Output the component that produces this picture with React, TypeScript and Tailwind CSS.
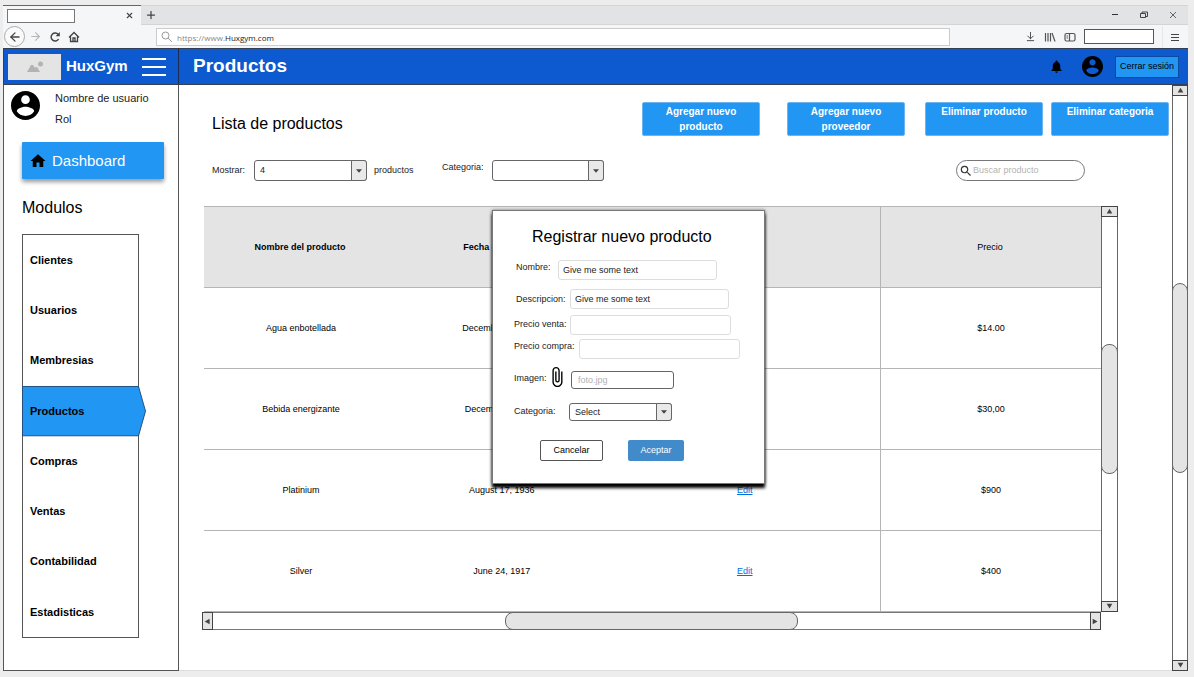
import React from "react";
import { MdNotifications, MdHome, MdSearch, MdAttachFile } from "react-icons/md";
import { ArrowLeft, ArrowRight, ArrowDownToLine, Plus, X } from "lucide-react";

const modules = ["Clientes", "Usuarios", "Membresias", "Productos", "Compras", "Ventas", "Contabilidad", "Estadisticas"];

const products = [
  { name: "Agua enbotellada", date: "December 10, 1815", price: "$14.00" },
  { name: "Bebida energizante", date: "December 9, 1906", price: "$30,00" },
  { name: "Platinium", date: "August 17, 1936", price: "$900" },
  { name: "Silver", date: "June 24, 1917", price: "$400" },
];

const arrows = {
  up: "M5 1 L9 8 H1 Z",
  down: "M5 8 L9 1 H1 Z",
  left: "M1 5 L8 1 V9 Z",
  right: "M8 5 L1 1 V9 Z",
};

function AccountIcon({ className }: { className: string }) {
  return (
    <svg viewBox="2 2 20 20" className={className} fill="currentColor">
      <path d="M12 2C6.480 2 2 6.480 2 12s4.480 10 10 10 10-4.480 10-10S17.520 2 12 2zm0 3c1.660 0 3 1.340 3 3s-1.340 3-3 3-3-1.340-3-3 1.340-3 3-3zm0 14.200c-2.500 0-4.710-1.280-6-3.220.030-1.990 4-3.080 6-3.080 1.990 0 5.970 1.090 6 3.080-1.290 1.940-3.500 3.220-6 3.220z" />
    </svg>
  );
}

function ArrowButton({ dir, className }: { dir: keyof typeof arrows; className: string }) {
  return (
    <button
      type="button"
      aria-label={`Desplazar ${dir}`}
      className={`flex shrink-0 items-center justify-center border border-[#444] bg-[#e4e4e4] ${className}`}
    >
      <svg viewBox="0 0 10 10" className="size-[7px] shrink-0" fill="#444">
        <path d={arrows[dir]} />
      </svg>
    </button>
  );
}

function VerticalScrollbar({ className }: { className: string }) {
  return (
    <div className={`flex shrink-0 flex-col ${className}`}>
      <ArrowButton dir="up" className="h-[11px] w-full" />
      <div className="flex flex-1 flex-col border-x border-[#666] bg-white">
        <div className="flex-1" />
        <div className="-mx-px flex-1 rounded-[8px] border border-[#666] bg-[#e4e4e4]" />
        <div className="flex-1" />
      </div>
      <ArrowButton dir="down" className="h-[11px] w-full" />
    </div>
  );
}

function HorizontalScrollbar() {
  return (
    <div className="mr-[17px] flex h-[18px]">
      <ArrowButton dir="left" className="h-full w-[11px]" />
      <div className="flex flex-1 border-y border-[#777] bg-white">
        <div className="flex-1" />
        <div className="-my-px flex-1 rounded-[8px] border border-[#666] bg-[#e4e4e4]" />
        <div className="flex-1" />
      </div>
      <ArrowButton dir="right" className="h-full w-[11px]" />
    </div>
  );
}

function SelectBox({ id, options, className }: { id: string; options: string[]; className: string }) {
  return (
    <div className={`relative ${className}`}>
      <select id={id} className="size-full appearance-none rounded-[3px] border border-[#666] bg-white pt-px pl-[5px] text-[9px] text-[#222]">
        {options.map((o) => (
          <option key={o}>{o}</option>
        ))}
      </select>
      <span className="pointer-events-none absolute inset-y-0 right-0 flex w-4 items-center justify-center rounded-r-[3px] border border-[#666] bg-[#e9e9e9]">
        <svg viewBox="0 0 10 6" className="h-[4px] w-[6px]" fill="#444">
          <path d="M0 0H10L5 6Z" />
        </svg>
      </span>
    </div>
  );
}

function Browser() {
  return (
    <div className="text-[#444]">
      <div className="flex h-5 bg-[#e2e3e5]">
        <div className="flex w-[138px] items-center justify-between border-t border-[#0a7ae6] bg-[#f5f6f8] pr-[7px] pl-1">
          <div className="h-[14px] w-[68px] border border-[#777] bg-white" />
          <button type="button" aria-label="Cerrar pestaña"><X size={9} strokeWidth={3} /></button>
        </div>
        <div className="flex flex-1 items-center border-t border-b border-[#d3d4d6] pr-[11px] pl-1">
          <button type="button" aria-label="Nueva pestaña"><Plus size={12} strokeWidth={2.5} /></button>
          <div className="ml-auto flex items-center gap-[21px]">
            <button type="button" aria-label="Minimizar">
              <svg viewBox="0 0 8 8" className="size-2" stroke="#333" fill="none"><path d="M1 3.500H7" /></svg>
            </button>
            <button type="button" aria-label="Restaurar">
              <svg viewBox="0 0 8 8" className="size-2" stroke="#333" fill="none"><path d="M.5 2.500H5.500V6.500H.5Z M2 2.500V1H7.500V5.500H5.500" strokeWidth=".9" /></svg>
            </button>
            <button type="button" aria-label="Cerrar">
              <svg viewBox="0 0 8 8" className="size-2" stroke="#444" fill="none"><path d="M1 1L7 7M7 1L1 7" strokeWidth=".8" /></svg>
            </button>
          </div>
        </div>
      </div>
      <div className="flex h-[23px] items-center bg-[#f5f6f8] pr-[9px]">
        <div className="flex w-[153px] shrink-0 items-center pl-px">
          <button type="button" aria-label="Atrás" className="flex size-[21px] items-center justify-center rounded-full border border-[#aaa] bg-[#fafafa]">
            <ArrowLeft size={14} strokeWidth={2.2} />
          </button>
          <button type="button" aria-label="Adelante" className="ml-1 text-[#b5b5b5]"><ArrowRight size={13} /></button>
          <button type="button" aria-label="Recargar" className="ml-[7px]">
            <svg viewBox="0 0 12 12" className="size-3" fill="none" stroke="#444" strokeWidth="1.500"><path d="M9.600 8A4 4 0 1 1 9.300 3.600" /><path d="M10.800 1V5.200H6.600Z" fill="#444" stroke="none" /></svg>
          </button>
          <button type="button" aria-label="Inicio" className="ml-[7px]">
            <svg viewBox="0 0 12 12" className="size-3" fill="none" stroke="#444" strokeWidth="1.300"><path d="M1 6.500L6 1.500L11 6.500M2.500 5.500V10.500H9.500V5.500" /><path d="M5 10V7H7V10" /></svg>
          </button>
        </div>
        <label className="flex h-[18px] w-[67.5%] items-center gap-1 border border-[#ccc] bg-white pl-1">
          <svg viewBox="0 0 12 12" className="size-3" fill="none" stroke="#999"><circle cx="4.500" cy="4.500" r="3.500" /><path d="M7 7L11 11" /></svg>
          <span className="pt-[2px] font-['Open_Sans',sans-serif] text-[8px] text-[#888]">
            https://www.<span className="text-[#222]">Huxgym.com</span>
          </span>
        </label>
        <div className="ml-auto flex items-center gap-2">
          <button type="button" aria-label="Descargas"><ArrowDownToLine size={11} /></button>
          <button type="button" aria-label="Biblioteca">
            <svg viewBox="0 0 12 12" className="size-3" fill="none" stroke="#555" strokeWidth="1.200"><path d="M1.500 2V10.500M4 2V10.500M6.500 2V10.500M8 2L11 10.500" /></svg>
          </button>
          <button type="button" aria-label="Panel lateral">
            <svg viewBox="0 0 12 12" className="size-3" fill="none" stroke="#555" strokeWidth="1.200"><rect x="1" y="2.500" width="10" height="7.500" rx="1.500" /><path d="M5.500 3V10M2.500 5H4M2.500 7H4" /></svg>
          </button>
          <input aria-label="Buscar" className="h-[15px] w-[70px] border border-[#555] bg-white" />
          <div className="h-[22px] w-px bg-[#e6e6e8]" />
          <button type="button" aria-label="Menú">
            <svg viewBox="0 0 8 8" className="size-2" stroke="#444"><path d="M0 1.500H8M0 4.500H8M0 7.500H8" /></svg>
          </button>
        </div>
      </div>
    </div>
  );
}

function Header() {
  return (
    <header className="flex h-[37px] border-y border-l border-[#333f55] bg-[#0c59d0] text-white">
      <div className="flex w-[175px] items-center border-r border-[#1c2c4c] pl-1">
        <div className="flex h-[26px] w-[53px] items-center justify-center bg-[#e4e4e4]">
          <svg viewBox="0 0 16 12" className="h-3 w-4" fill="#b3b3b3"><path d="M0 11L4 4H6L8 7L9 6H10L13 11Z" /><circle cx="13.500" cy="3" r="2.500" /></svg>
        </div>
        <span className="ml-[5px] text-[15px] font-bold">HuxGym</span>
        <button type="button" aria-label="Abrir menú" className="ml-auto pr-3">
          <svg viewBox="0 0 24 18" className="h-[18px] w-6" stroke="white" strokeWidth="2"><path d="M0 1H24M0 9H24M0 17H24" /></svg>
        </button>
      </div>
      <h1 className="self-center pb-[2px] pl-[14px] text-[19px] leading-6 font-bold">Productos</h1>
      <div className="ml-auto flex items-center pr-[9px] text-black">
        <button type="button" aria-label="Notificaciones"><MdNotifications size={15} /></button>
        <button type="button" aria-label="Cuenta" className="ml-[18px]"><AccountIcon className="size-[21px]" /></button>
        <button type="button" className="ml-3 h-[22px] w-16 border border-[#0b4a9c] bg-[#2196f3] text-[9px] whitespace-nowrap">Cerrar sesión</button>
      </div>
    </header>
  );
}

function Sidebar() {
  return (
    <aside className="w-44 shrink-0 border-x border-b border-[#555] bg-white">
      <div className="flex h-[50px] pt-[2px] pl-[7px]">
        <AccountIcon className="mt-1 size-[29px]" />
        <div className="pt-px pl-[15px] text-[11px] leading-[21px] text-[#222]">
          <p>Nombre de usuario</p>
          <p>Rol</p>
        </div>
      </div>
      <div className="px-[18px]">
        <a href="#dashboard" className="mt-[7px] mr-[-4px] flex h-[37px] items-center gap-1 rounded-[1px] bg-[#2196f3] pl-[7px] text-[15px] text-white shadow-[0_3px_4px_rgba(0,0,0,0.4)]">
          <MdHome size={18} color="black" />
          <span className="pt-px pl-px">Dashboard</span>
        </a>
        <h2 className="mt-[17px] text-[16px] leading-6">Modulos</h2>
        <ul className="mt-[14px] flex h-[404px] w-[117px] flex-col border border-[#555]">
          {modules.map((m) => (
            <li key={m} className="relative flex flex-1 items-center">
              {m === "Productos" && (
                <svg viewBox="0 0 124 52" preserveAspectRatio="none" className="absolute top-0 -left-px h-full w-[124px] overflow-visible">
                  <path d="M.5 .5H116.500L123.500 26L116.500 51.500H.5Z" fill="#2196f3" stroke="#224f7c" />
                </svg>
              )}
              <a href={`#${m}`} className="relative pl-[7px] text-[11px] font-bold">{m}</a>
            </li>
          ))}
        </ul>
      </div>
    </aside>
  );
}

const action = "h-[34px] w-[118px] rounded-[2px] border border-[#6db4ee] bg-[#2196f3] px-4 pt-px text-[10px] leading-[15px] font-bold text-white flex justify-center whitespace-nowrap";

function Toolbar() {
  return (
    <div>
      <div className="flex items-center pr-[3px] pl-[33px]">
        <h2 className="mt-[10px] text-[16px] leading-6">Lista de productos</h2>
        <div className="ml-auto flex">
          <button type="button" className={action}>Agregar nuevo<br />producto</button>
          <button type="button" className={`ml-[27px] ${action}`}>Agregar nuevo<br />proveedor</button>
          <button type="button" className={`ml-5 ${action}`}>Eliminar producto</button>
          <button type="button" className={`ml-2 ${action}`}>Eliminar categoria</button>
        </div>
      </div>
      <div className="mt-6 flex h-[21px] items-center pr-[87px] pl-[33px] text-[9px] text-[#222]">
        <label htmlFor="show" className="w-[42px]">Mostrar:</label>
        <SelectBox id="show" options={["4", "8", "12"]} className="h-[21px] w-[113px]" />
        <span className="ml-[7px] w-[68px]">productos</span>
        <label htmlFor="category-filter" className="w-[50px] pb-[6px]">Categoria:</label>
        <SelectBox id="category-filter" options={[""]} className="h-[21px] w-28" />
        <label className="ml-auto flex h-[21px] w-[129px] items-center rounded-full border border-[#777] bg-white pl-[2px]">
          <MdSearch size={14} color="#333" className="shrink-0" />
          <input aria-label="Buscar producto" placeholder="Buscar producto" className="w-full min-w-0 bg-transparent pt-px text-[9px] outline-none placeholder:text-[#b3b3b3]" />
        </label>
      </div>
    </div>
  );
}

function ProductTable() {
  return (
    <div className="mt-[25px] pr-[54px] pl-[23px]">
      <div className="flex">
        <table className="ml-[2px] flex-1 table-fixed border-collapse text-center text-[9px]">
          <colgroup>
            <col className="w-[21.4%]" />
            <col className="w-[23.6%]" />
            <col className="w-[30.4%]" />
            <col className="w-[24.6%]" />
          </colgroup>
          <thead>
            <tr className="h-[81px] border-y border-[#b5b5b5] bg-[#e4e4e4]">
              <th className="pt-px">Nombre del producto</th>
              <th className="pt-px pr-[2px]">Fecha de registro</th>
              <th className="pt-px">Acciones</th>
              <th className="border-l border-[#b5b5b5] pt-px pr-[2px] font-normal">Precio</th>
            </tr>
          </thead>
          <tbody>
            {products.map((p) => (
              <tr key={p.name} className="h-[81px] border-b border-[#b5b5b5]">
                <td className="pt-[2px] pl-[2px]">{p.name}</td>
                <td className="pt-[2px]">{p.date}</td>
                <td className="pt-[2px] pl-[2px]"><a href="#edit" className="text-[#0070e0] underline">Edit</a></td>
                <td className="border-l border-[#b5b5b5] pt-[2px]">{p.price}</td>
              </tr>
            ))}
          </tbody>
        </table>
        <VerticalScrollbar className="w-[17px]" />
      </div>
      <HorizontalScrollbar />
    </div>
  );
}

const field = "h-5 rounded-[3px] border border-[#ddd] bg-white px-1 text-[9px]";

function ProductDialog() {
  return (
    <form
      role="dialog"
      aria-labelledby="dialog-title"
      onSubmit={(e) => e.preventDefault()}
      className="absolute top-[125px] left-[313px] h-[274px] w-[273px] border border-[#777] bg-white pl-5 text-[9px] text-[#222] shadow-[0_4px_3px_#000,0_0_3px_rgba(0,0,0,0.5)]"
    >
      <h2 id="dialog-title" className="mt-[14px] pl-[19px] text-[16px] leading-6 text-black">Registrar nuevo producto</h2>
      <div className="mt-[11px] flex pl-[3px]">
        <label htmlFor="name" className="w-[42px] leading-[14px]">Nombre:</label>
        <input id="name" defaultValue="Give me some text" className={`w-[159px] ${field}`} />
      </div>
      <div className="mt-[9px] flex pl-[3px]">
        <label htmlFor="description" className="w-[54px] leading-5">Descripcion:</label>
        <input id="description" defaultValue="Give me some text" className={`w-[159px] ${field}`} />
      </div>
      <div className="mt-[6px] flex pl-px">
        <label htmlFor="sale" className="w-14 leading-[18px]">Precio venta:</label>
        <input id="sale" className={`w-[161px] ${field}`} />
      </div>
      <div className="mt-1 flex pl-px">
        <label htmlFor="cost" className="w-[65px] leading-[14px]">Precio compra:</label>
        <input id="cost" className={`w-[161px] ${field}`} />
      </div>
      <div className="mt-[7px] flex h-6 items-center pt-[3px] pl-px">
        <label htmlFor="image" className="w-8 pb-[2px]">Imagen:</label>
        <MdAttachFile size={22} color="black" className="mb-[5px] shrink-0" />
        <input id="image" placeholder="foto.jpg" className="ml-[3px] h-[18px] w-[103px] rounded-[3px] border border-[#666] px-[6px] pt-px text-[9px] placeholder:text-[#b3b3b3]" />
      </div>
      <div className="mt-[13px] flex pl-px">
        <label htmlFor="category" className="w-[55px] leading-4">Categoria:</label>
        <SelectBox id="category" options={["Select"]} className="h-[18px] w-[103px]" />
      </div>
      <div className="mt-[19px] flex items-center gap-[25px] pl-[27px]">
        <button type="button" className="h-[21px] w-[63px] rounded-[2px] border border-[#555] text-black">Cancelar</button>
        <button type="submit" className="h-[21px] w-14 rounded-[2px] bg-[#428bca] text-white">Aceptar</button>
      </div>
    </form>
  );
}

export default function App() {
  return (
    <div className="flex min-h-screen flex-col bg-[#ededed] pt-[5px] pr-[6px] pb-[6px] pl-[3px] font-['Liberation_Sans',Arial,sans-serif] text-black">
      <Browser />
      <Header />
      <div className="flex flex-1">
        <Sidebar />
        <main className="relative flex-1 border-b border-[#ddd] bg-white pt-[17px]">
          <Toolbar />
          <ProductTable />
          <ProductDialog />
        </main>
        <VerticalScrollbar className="w-4" />
      </div>
    </div>
  );
}
